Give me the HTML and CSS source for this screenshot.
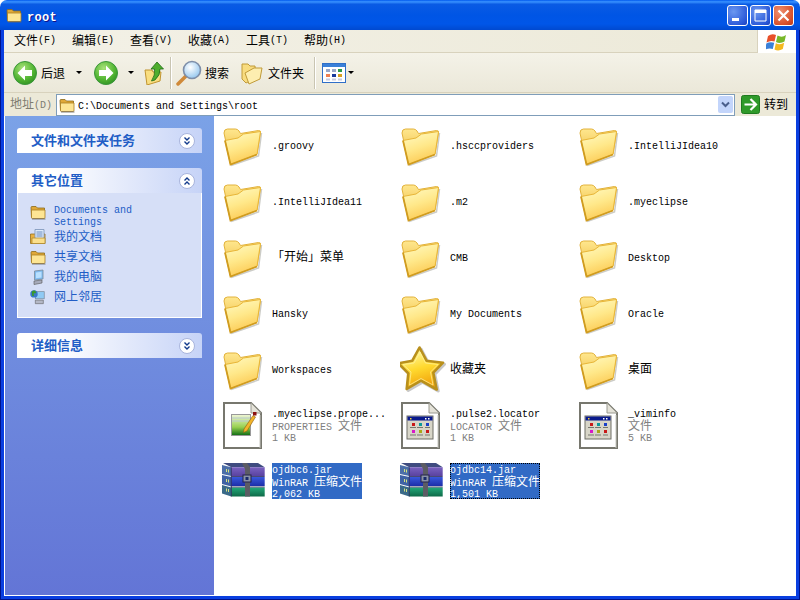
FILE: index.html
```html
<!DOCTYPE html>
<html lang="zh">
<head>
<meta charset="utf-8">
<title>root</title>
<link rel="stylesheet" href="styles.css">
</head>
<body>
<svg class="defs" width="0" height="0" aria-hidden="true">
  <defs>
    <linearGradient id="fold" x1="0.2" y1="0" x2="0.55" y2="1"><stop offset="0" stop-color="#fff9c0"/><stop offset="0.5" stop-color="#ffe88a"/><stop offset="1" stop-color="#fcc850"/></linearGradient>
    <linearGradient id="foldback" x1="0" y1="0" x2="0" y2="1"><stop offset="0" stop-color="#ffe78e"/><stop offset="1" stop-color="#e8b030"/></linearGradient>
    <linearGradient id="star" x1="0.3" y1="0" x2="0.6" y2="1"><stop offset="0" stop-color="#fff79a"/><stop offset="0.5" stop-color="#ffd92e"/><stop offset="1" stop-color="#f2a60e"/></linearGradient>
    <radialGradient id="ball" cx="0.4" cy="0.3" r="0.8"><stop offset="0" stop-color="#a8e27a"/><stop offset="0.6" stop-color="#52b532"/><stop offset="1" stop-color="#2a8a20"/></radialGradient>
    <linearGradient id="chart" x1="0" y1="0" x2="0" y2="1"><stop offset="0" stop-color="#f0f6d8"/><stop offset="0.6" stop-color="#98d050"/><stop offset="1" stop-color="#0c6a12"/></linearGradient>
    <radialGradient id="lens" cx="0.4" cy="0.35" r="0.7"><stop offset="0" stop-color="#ffffff"/><stop offset="1" stop-color="#8fc4ee"/></radialGradient>
    <linearGradient id="bookp" x1="0" y1="0" x2="0" y2="1"><stop offset="0" stop-color="#7a62c0"/><stop offset="1" stop-color="#5a42a0"/></linearGradient>
    <linearGradient id="bookb" x1="0" y1="0" x2="0" y2="1"><stop offset="0" stop-color="#3a58dc"/><stop offset="1" stop-color="#1c2ea8"/></linearGradient>
    <linearGradient id="bookg" x1="0" y1="0" x2="0" y2="1"><stop offset="0" stop-color="#22a878"/><stop offset="1" stop-color="#0f6a48"/></linearGradient>
    <symbol id="folder" viewBox="0 0 48 48">
      <path d="M9 44.500L36.500 35L39.500 12" fill="none" stroke="#9a9a90" stroke-width="1.500" opacity="0.5"/>
      <path d="M2 12Q2 8 5.500 8H13.500Q15.500 8 17 10L18.500 12.500L36.500 9.500Q39 9.500 38.500 11.500L35 33L8.500 43Z" fill="url(#foldback)" stroke="#e2b23c"/>
      <path d="M3 19.500L16 17L21.500 13L38.500 10.500L35 33.500L8.500 43.500Z" fill="url(#fold)" stroke="#e8b638"/>
      <path d="M3 19.500L8.500 43.500L35 33.500" fill="none" stroke="#d09c20" stroke-width="1.800"/>
    </symbol>
    <symbol id="star-icon" viewBox="0 0 48 48">
      <path d="M19.500 2.500L26.500 15.700L43 17.700L33.300 27.700L36.700 44.500L21 35.700L6.700 44L8.300 28.300L-1.500 18.300L12.300 15.700Z" fill="#777" opacity="0.4" stroke="#777" stroke-width="3" stroke-linejoin="round" transform="translate(1.500 1.500)"/>
      <path d="M19.500 2.500L26.500 15.700L43 17.700L33.300 27.700L36.700 44.500L21 35.700L6.700 44L8.300 28.300L-1.500 18.300L12.300 15.700Z" fill="url(#star)" stroke="#b9901c" stroke-width="2.600" stroke-linejoin="round"/>
      <path d="M20 7L25.500 18L38 19.500L30.500 27L33 40L21 33.500L9.500 40L11 27L3 19.500L14 18Z" fill="url(#star)" stroke="#fff6b0" stroke-width="0.700" stroke-linejoin="round" opacity="0.9"/>
    </symbol>
    <symbol id="page" viewBox="0 0 48 48">
      <path d="M2 2H29L39 12V47H2Z" fill="#fff" stroke="#77776e" stroke-width="2"/>
      <path d="M29 2V12H39Z" fill="#e4e2d8" stroke="#9a9a90"/>
      <path d="M38 14V47" stroke="#c8c8c0" fill="none"/>
    </symbol>
    <symbol id="app-doc" viewBox="0 0 48 48">
      <use href="#page" width="48" height="48"/>
      <rect x="7" y="15" width="26" height="23" fill="#d8d6c8" stroke="#6e6e66"/>
      <rect x="7.500" y="15.500" width="25" height="4" fill="#0a1a8c"/>
      <rect x="10" y="17" width="1.500" height="1.500" fill="#f0d040"/>
      <rect x="25" y="17" width="1.500" height="1.500" fill="#fff"/><rect x="28" y="17" width="1.500" height="1.500" fill="#fff"/>
      <rect x="12" y="22" width="3" height="3" fill="#c81818"/><rect x="19" y="22" width="3" height="3" fill="#0a9a9a"/><rect x="26" y="22" width="3" height="3" fill="#1a40c8"/>
      <rect x="12" y="29" width="3" height="3" fill="#d818c8"/><rect x="19" y="29" width="3" height="3" fill="#a8a818"/><rect x="26" y="29" width="3" height="3" fill="#c81818"/>
      <path d="M10 26.500H16M17 26.500H23M25 26.500H30M10 34H16M17 34H23M25 34H30" stroke="#77776e" fill="none"/>
    </symbol>
    <symbol id="prop-doc" viewBox="0 0 48 48">
      <use href="#page" width="48" height="48"/>
      <rect x="9.500" y="13.500" width="19" height="21" fill="url(#chart)" stroke="#999"/>
      <path d="M10 17H28M10 20H28" stroke="#b8c8d0" fill="none"/>
      <path d="M22 28L31 14.500L33.500 16L25 30L21.500 31.500Z" fill="#f2b42a" stroke="#8a5a10" stroke-width="0.600"/>
      <rect x="31" y="11" width="3.500" height="3.500" fill="#8c1010"/>
    </symbol>
    <symbol id="rar" viewBox="0 0 48 48">
      <path d="M1 6H36L42.700 10.300H9.300Z" fill="#3f4c80"/>
      <path d="M0 8L9.300 10.300V19L0 17Z" fill="#4c6fa8"/>
      <path d="M9.300 10.300H42.700V19H9.300Z" fill="url(#bookp)"/>
      <path d="M0 18L9.300 20V29.500L0 27Z" fill="#3f62a4"/>
      <path d="M9.300 20H42.700V29H9.300Z" fill="url(#bookb)"/>
      <path d="M0 28L9.300 30.500V39.500L0 36.500Z" fill="#3a6a88"/>
      <path d="M9.300 30.500H42.700V39.500H9.300Z" fill="url(#bookg)"/>
      <path d="M9.300 19.500H42.700M9.300 30H42.700M9.300 10.300V39.500" stroke="#1c1c50" stroke-width="0.800" fill="none"/>
      <rect x="4" y="12" width="1" height="3" fill="#d6e480"/><rect x="6" y="12.500" width="1" height="3" fill="#d6e480"/>
      <rect x="4" y="22" width="1" height="3" fill="#d6e480"/><rect x="6" y="22.500" width="1" height="3" fill="#d6e480"/>
      <rect x="4" y="31.500" width="1" height="3" fill="#d6e480"/><rect x="6" y="32" width="1" height="3" fill="#d6e480"/>
      <path d="M20 6H25L28 10.300V39.500H23V12Z" fill="#5c5c64"/>
      <rect x="21" y="18" width="8" height="7" fill="#8a92a6" stroke="#23234a"/><rect x="23.500" y="20" width="3" height="3" fill="#1a2a6a"/>
    </symbol>
    <symbol id="small-folder" viewBox="0 0 16 16">
      <path d="M1 3.500Q1 2.500 2 2.500H6L7.500 4H14.500V13.500H1.500Z" fill="#e0a838" stroke="#8a6a1a" stroke-width="0.800"/>
      <path d="M1.500 6H15V13.500Q15 14.500 14 14.500H2.500Q1.500 14.500 1.500 13.500Z" fill="#fde594" stroke="#a87e22" stroke-width="0.800"/>
      <path d="M2 15H15.500" stroke="#666" stroke-width="0.800"/>
    </symbol>
    <symbol id="mydocs" viewBox="0 0 16 16">
      <path d="M0.500 5H15V14.500H0.500Z" fill="#e8b040" stroke="#96701c" stroke-width="0.800"/>
      <path d="M5 0.500H14V12H5Z" fill="#dceafa" stroke="#7a92b8" stroke-width="0.800"/>
      <path d="M6.500 3H12.500M6.500 5H12.500M6.500 7H12.500" stroke="#6a8cc0" fill="none"/>
      <path d="M2 9H15V14.500H2Z" fill="#fbdf8c" stroke="#b08a30" stroke-width="0.800"/>
    </symbol>
    <symbol id="computer" viewBox="0 0 16 16">
      <path d="M4.500 2L13 1V10L4.500 11Z" fill="#7fbbf0" stroke="#7a8a9a" stroke-width="0.800"/>
      <path d="M6 3.500L11.500 2.800V8.500L6 9.200Z" fill="#b8e0ff"/>
      <path d="M4 12L12 11V14L4 15.500Z" fill="#a8acbc" stroke="#555" stroke-width="0.600"/>
    </symbol>
    <symbol id="network" viewBox="0 0 18 18">
      <rect x="6" y="3" width="10" height="8" fill="#8fcaf5" stroke="#7a8a9a" stroke-width="0.800"/>
      <path d="M6 12.500H15V16.500H6Z" fill="#b4b8c6" stroke="#555" stroke-width="0.600"/>
      <circle cx="4.500" cy="5.500" r="4.200" fill="#3a78c8"/>
      <path d="M2 3Q4 1 6 2L7 4.500L4 5L4.500 8L2.500 8Z" fill="#3a9a2a"/>
    </symbol>
    <symbol id="chev-down" viewBox="0 0 16 16">
      <circle cx="8" cy="8" r="7.500" fill="#fff" stroke="#a8b4dc"/>
      <path d="M5.500 4.500L8 7L10.500 4.500M5.500 8.500L8 11L10.500 8.500" fill="none" stroke="#123a8c" stroke-width="1.400"/>
    </symbol>
    <symbol id="chev-up" viewBox="0 0 16 16">
      <circle cx="8" cy="8" r="7.500" fill="#fff" stroke="#a8b4dc"/>
      <path d="M5.500 7.500L8 5L10.500 7.500M5.500 11.500L8 9L10.500 11.500" fill="none" stroke="#123a8c" stroke-width="1.400"/>
    </symbol>
  </defs>
</svg>

<div class="window">
  <header class="titlebar">
    <svg class="icon16 title-icon"><use href="#small-folder"/></svg>
    <span class="title">root</span>
    <div class="controls">
      <span class="ctl ctl-blue"><svg viewBox="0 0 21 21" width="21" height="21"><rect x="5" y="13" width="7" height="3" fill="#fff"/></svg></span>
      <span class="ctl ctl-blue"><svg viewBox="0 0 21 21" width="21" height="21"><path d="M5 5H16V16H5Z" fill="none" stroke="#fff"/><rect x="5" y="5" width="11" height="3" fill="#fff"/></svg></span>
      <span class="ctl ctl-red"><svg viewBox="0 0 21 21" width="21" height="21"><path d="M5.500 5.500L15.500 15.500M15.500 5.500L5.500 15.500" stroke="#fff" stroke-width="2.200"/></svg></span>
    </div>
  </header>

  <div class="frame">
    <nav class="menubar">
      <div class="menus">
        <span class="menu"><span class="cn">文件</span>(F)</span>
        <span class="menu"><span class="cn">编辑</span>(E)</span>
        <span class="menu"><span class="cn">查看</span>(V)</span>
        <span class="menu"><span class="cn">收藏</span>(A)</span>
        <span class="menu"><span class="cn">工具</span>(T)</span>
        <span class="menu"><span class="cn">帮助</span>(H)</span>
      </div>
      <div class="flag">
        <svg viewBox="0 0 22 20" width="22" height="20">
          <path d="M2 4Q6 1 10 3L8.500 9.500Q4.500 8 0.500 10.500Z" fill="#e8502a"/>
          <path d="M11.500 3.500Q16 6 20 3L18.500 9.500Q14 12 10 10Z" fill="#78b82a"/>
          <path d="M0.300 11.500Q4 9.500 8.200 10.800L6.800 17Q3 15.500 -1 17.800Z" fill="#3a80d8"/>
          <path d="M9.800 11.200Q14 13.500 18.200 10.800L16.800 17Q12.500 19.500 8.500 17.500Z" fill="#f4b820"/>
        </svg>
      </div>
    </nav>

    <div class="toolbar">
      <div class="tbtn back">
        <svg viewBox="0 0 24 24" width="24" height="24"><circle cx="12" cy="12" r="11.500" fill="url(#ball)" stroke="#3a963a"/><path d="M12 4.500L4.500 12L12 19.500V15H19V9H12Z" fill="#fff"/></svg>
        <span class="cn">后退</span>
      </div>
      <span class="caret caret-a"></span>
      <div class="tbtn fwd">
        <svg viewBox="0 0 24 24" width="24" height="24"><circle cx="12" cy="12" r="11.500" fill="url(#ball)" stroke="#3a963a"/><path d="M12 4.500L19.500 12L12 19.500V15H5V9H12Z" fill="#fff"/></svg>
      </div>
      <span class="caret caret-b"></span>
      <svg class="up" viewBox="0 0 20 24" width="20" height="24">
        <path d="M1 9H8L9 11H17L16 20L3 24Z" fill="#f9de80" stroke="#c09430"/>
        <path d="M13 1L19.500 8H16Q16.500 14 11 19L7.500 20Q11.500 14 10.500 8H7Z" fill="#4fae2e" stroke="#1f6a18" stroke-width="0.800"/>
      </svg>
      <span class="tsep"></span>
      <div class="tbtn search">
        <svg viewBox="0 0 26 26" width="26" height="26"><path d="M10.500 15.500L2 24" stroke="#d08a3a" stroke-width="3.500" stroke-linecap="round"/><circle cx="16" cy="10" r="8.500" fill="url(#lens)" stroke="#7e8ea8" stroke-width="1.600"/></svg>
        <span class="cn">搜索</span>
      </div>
      <div class="tbtn folders">
        <svg viewBox="0 0 22 24" width="22" height="24"><path d="M1 3H7L9 5H14L15 17L5 22L1 18Z" fill="#f8dc80" stroke="#c09a38"/><path d="M4 12L13 7H21L19 18L8 23Z" fill="#fdeeb0" stroke="#c09a38"/></svg>
        <span class="cn">文件夹</span>
      </div>
      <span class="tsep sep2"></span>
      <div class="views">
        <svg viewBox="0 0 24 20" width="24" height="20"><rect x="0.500" y="0.500" width="23" height="19" fill="#fff" stroke="#2f6fc8"/><rect x="1" y="1" width="22" height="3" fill="#3a80d8"/><rect x="4" y="6" width="4" height="3" fill="#9aa8c8"/><rect x="10" y="6" width="4" height="3" fill="#9aa8c8"/><rect x="16" y="6" width="4" height="3" fill="#2a9a4a"/><rect x="4" y="11" width="4" height="3" fill="#f08050"/><rect x="10" y="11" width="4" height="3" fill="#1a3a9c"/><rect x="16" y="11" width="4" height="3" fill="#d8a020"/><rect x="4" y="15.500" width="4" height="2" fill="#c8cce0"/><rect x="10" y="15.500" width="4" height="2" fill="#c8cce0"/><rect x="16" y="15.500" width="4" height="2" fill="#c8cce0"/></svg>
        <span class="caret"></span>
      </div>
    </div>

    <div class="addressbar">
      <span class="addr-label"><span class="cn">地址</span>(D)</span>
      <div class="addr-input">
        <svg class="icon16"><use href="#small-folder"/></svg>
        <span class="addr-text">C:\Documents and Settings\root</span>
        <span class="addr-drop"><svg viewBox="0 0 15 17" width="15" height="17"><path d="M4 6.500L7.500 10L11 6.500" fill="none" stroke="#4a5f8c" stroke-width="2"/></svg></span>
      </div>
      <div class="go">
        <svg viewBox="0 0 19 19" width="19" height="19"><rect x="0.500" y="0.500" width="18" height="18" rx="2" fill="#2f9a2a" stroke="#1f7a1f"/><path d="M9.500 4L15 9.500L9.500 15M3.500 9.500H14" fill="none" stroke="#fff" stroke-width="2.200"/></svg>
        <span class="cn">转到</span>
      </div>
    </div>

    <div class="main">
      <aside class="sidebar">
        <section class="panel">
          <div class="panel-head"><span class="panel-title">文件和文件夹任务</span><svg class="chev"><use href="#chev-down"/></svg></div>
        </section>
        <section class="panel">
          <div class="panel-head"><span class="panel-title">其它位置</span><svg class="chev"><use href="#chev-up"/></svg></div>
          <div class="panel-body">
            <div class="link first"><svg class="icon16"><use href="#small-folder"/></svg><span class="link-text latin">Documents and Settings</span></div>
            <div class="link"><svg class="icon16"><use href="#mydocs"/></svg><span class="link-text cn">我的文档</span></div>
            <div class="link"><svg class="icon16"><use href="#small-folder"/></svg><span class="link-text cn">共享文档</span></div>
            <div class="link"><svg class="icon16"><use href="#computer"/></svg><span class="link-text cn">我的电脑</span></div>
            <div class="link"><svg class="icon16"><use href="#network"/></svg><span class="link-text cn">网上邻居</span></div>
          </div>
        </section>
        <section class="panel">
          <div class="panel-head"><span class="panel-title">详细信息</span><svg class="chev"><use href="#chev-down"/></svg></div>
        </section>
      </aside>

      <div class="files">
        <div class="tile"><svg class="icon48"><use href="#folder"/></svg><span class="name">.groovy</span></div>
        <div class="tile"><svg class="icon48"><use href="#folder"/></svg><span class="name">.hsccproviders</span></div>
        <div class="tile"><svg class="icon48"><use href="#folder"/></svg><span class="name">.IntelliJIdea10</span></div>
        <div class="tile"><svg class="icon48"><use href="#folder"/></svg><span class="name">.IntelliJIdea11</span></div>
        <div class="tile"><svg class="icon48"><use href="#folder"/></svg><span class="name">.m2</span></div>
        <div class="tile"><svg class="icon48"><use href="#folder"/></svg><span class="name">.myeclipse</span></div>
        <div class="tile"><svg class="icon48"><use href="#folder"/></svg><span class="name cn">「开始」菜单</span></div>
        <div class="tile"><svg class="icon48"><use href="#folder"/></svg><span class="name">CMB</span></div>
        <div class="tile"><svg class="icon48"><use href="#folder"/></svg><span class="name">Desktop</span></div>
        <div class="tile"><svg class="icon48"><use href="#folder"/></svg><span class="name">Hansky</span></div>
        <div class="tile"><svg class="icon48"><use href="#folder"/></svg><span class="name">My Documents</span></div>
        <div class="tile"><svg class="icon48"><use href="#folder"/></svg><span class="name">Oracle</span></div>
        <div class="tile"><svg class="icon48"><use href="#folder"/></svg><span class="name">Workspaces</span></div>
        <div class="tile"><svg class="icon48 star"><use href="#star-icon"/></svg><span class="name cn">收藏夹</span></div>
        <div class="tile"><svg class="icon48"><use href="#folder"/></svg><span class="name cn">桌面</span></div>
        <div class="tile"><svg class="icon48"><use href="#prop-doc"/></svg><span class="name multi"><span class="line">.myeclipse.prope...</span><span class="line meta">PROPERTIES <span class="cn">文件</span></span><span class="line meta">1 KB</span></span></div>
        <div class="tile"><svg class="icon48"><use href="#app-doc"/></svg><span class="name multi"><span class="line">.pulse2.locator</span><span class="line meta">LOCATOR <span class="cn">文件</span></span><span class="line meta">1 KB</span></span></div>
        <div class="tile"><svg class="icon48"><use href="#app-doc"/></svg><span class="name multi"><span class="line">_viminfo</span><span class="line meta"><span class="cn">文件</span></span><span class="line meta">5 KB</span></span></div>
        <div class="tile"><svg class="icon48"><use href="#rar"/></svg><span class="name multi selected"><span class="line">ojdbc6.jar</span><span class="line">WinRAR <span class="cn">压缩文件</span></span><span class="line">2,062 KB</span></span></div>
        <div class="tile"><svg class="icon48"><use href="#rar"/></svg><span class="name multi selected focused"><span class="line">ojdbc14.jar</span><span class="line">WinRAR <span class="cn">压缩文件</span></span><span class="line">1,501 KB</span></span></div>
      </div>
    </div>
  </div>
</div>
</body>
</html>
```

FILE: styles.css
```css
* { box-sizing: border-box; }
html, body { margin: 0; padding: 0; }
body {
  width: 800px;
  height: 600px;
  overflow: hidden;
  background: #fff;
  font-family: "Liberation Mono", "Noto Sans CJK SC", monospace;
  font-size: 10px;
  color: #000;
}
.defs { position: absolute; }
.cn { font-family: "Noto Sans CJK SC", sans-serif; font-size: 12px; line-height: 12px; }

.window { width: 800px; height: 600px; display: flex; flex-direction: column; }

.titlebar {
  height: 30px;
  flex: none;
  display: flex;
  align-items: center;
  padding: 0 6px;
  border-radius: 7px 7px 0 0;
  background: linear-gradient(180deg, #0058ee 0%, #3a93ff 6%, #0a5be4 14%, #0055e5 50%, #0056e8 80%, #0049d0 100%);
}
.title-icon { margin-right: 5px; }
.title {
  padding-top: 5px;
  font-family: "Liberation Mono", monospace;
  font-weight: bold;
  font-size: 12px;
  letter-spacing: 0.3px;
  color: #fff;
  text-shadow: 1px 1px 0 #0f1089;
}
.controls { margin-left: auto; display: flex; gap: 2px; }
.ctl {
  width: 21px;
  height: 21px;
  border: 1px solid #fff;
  border-radius: 3px;
  display: block;
  overflow: hidden;
}
.ctl svg { display: block; margin: -1px; }
.ctl-blue { background: radial-gradient(circle at 30% 30%, #6b97f0, #2a58d8 75%, #1c3fb8); }
.ctl-red { background: radial-gradient(circle at 30% 30%, #ee9070, #d9502a 70%, #b83a18); }

.frame {
  flex: 1;
  min-height: 0;
  display: flex;
  flex-direction: column;
  padding: 0 4px 4px;
  background: #0a3fe0;
  box-shadow: inset 1px 0 #00138c, inset -1px 0 #00138c, inset 0 -1px #00138c;
}

.menubar {
  height: 23px;
  flex: none;
  display: flex;
  background: linear-gradient(90deg, #f3f1e7, #ece9d8);
  border-bottom: 1px solid #d8d2bd;
}
.menus { flex: 1; display: flex; padding-left: 2px; }
.menu {
  width: 58px;
  padding: 0 0 2px 8px;
  display: flex;
  align-items: center;
  height: 22px;
  white-space: nowrap;
}
.flag {
  width: 39px;
  height: 23px;
  background: #fff;
  display: flex;
  align-items: center;
  justify-content: center;
  border-left: 1px solid #d8d2bd;
}

.toolbar {
  height: 40px;
  flex: none;
  display: flex;
  align-items: center;
  padding-left: 9px;
  background: linear-gradient(180deg, #f4f2e8, #ebe8d9);
  border-bottom: 1px solid #d8d2bd;
}
.tbtn { display: flex; align-items: center; }
.back .cn { margin-left: 4px; }
.caret {
  display: block;
  width: 0;
  height: 0;
  border: 3px solid transparent;
  border-top: 3px solid #000;
  border-bottom: 0;
}
.caret-a { margin: 0 12px 0 11px; }
.caret-b { margin: 0 10px 0 10px; }
.up { flex: none; }
.tsep { width: 1px; height: 32px; background: #c9c5b2; margin: 0 5px 0 6px; box-shadow: 1px 0 #fff; }
.search .cn { margin-left: 3px; }
.folders { margin-left: 12px; }
.folders .cn { margin-left: 5px; }
.sep2 { margin: 0 7px 0 10px; }
.views { display: flex; align-items: center; gap: 2px; }

.addressbar {
  height: 23px;
  flex: none;
  display: flex;
  align-items: center;
  background: #ece9d8;
}
.addr-label { width: 52px; padding: 0 0 2px 6px; color: #7e7c70; white-space: nowrap; }
.addr-input {
  width: 679px;
  height: 22px;
  display: flex;
  align-items: center;
  gap: 3px;
  padding-left: 2px;
  background: #fff;
  border: 1px solid #7f9db9;
}
.addr-text { flex: 1; padding-top: 4px; }
.addr-drop {
  width: 15px;
  height: 17px;
  margin-right: 1px;
  background: #c3d5fb;
  border-radius: 2px;
}
.addr-drop svg { display: block; }
.go { margin-left: 6px; display: flex; align-items: center; gap: 4px; }
.go .cn { margin-bottom: 2px; }

.main { flex: 1; min-height: 0; display: flex; background: #fff; }

.sidebar {
  width: 209px;
  margin-left: 1px;
  margin-bottom: 1px;
  padding: 12px 12px 0;
  display: flex;
  flex-direction: column;
  gap: 15px;
  background: linear-gradient(180deg, #7ba2e7, #6375d6);
}
.panel-head {
  height: 25px;
  display: flex;
  align-items: center;
  justify-content: space-between;
  padding: 0 7px 0 14px;
  border-radius: 3px 3px 0 0;
  background: linear-gradient(90deg, #fff 20%, #c6d3f7);
}
.panel-title {
  margin-bottom: 2px;
  font-family: "Noto Sans CJK SC", sans-serif;
  font-size: 13px;
  font-weight: bold;
  color: #215dc6;
}
.chev { width: 16px; height: 16px; }
.panel-body {
  padding: 11px 0 11px 12px;
  height: 125px;
  background: #d6dff7;
  border: 1px solid #fff;
  border-top: 0;
}
.link { height: 20px; display: flex; align-items: center; gap: 8px; color: #215dc6; }
.link.first { height: 23px; align-items: flex-start; }
.link-text { width: 130px; line-height: 12px; }
.link-text.latin { padding-top: 1px; }
.link-text.cn { margin-top: -2px; }
.icon16 { width: 16px; height: 16px; flex: none; }

.files {
  flex: 1;
  padding: 1px 0 0 8px;
  display: grid;
  grid-template-columns: repeat(3, 178px);
  grid-auto-rows: 56px;
}
.tile { display: flex; align-items: center; }
.icon48 { width: 48px; height: 48px; flex: none; margin-right: 2px; }
.star { overflow: visible; }
.name { padding-top: 4px; line-height: 12px; white-space: nowrap; }
.name.cn { padding-top: 0; margin-top: -2px; }
.multi { padding-top: 0; display: flex; flex-direction: column; }
.line { display: block; height: 12px; line-height: 16px; }
.meta { color: #808080; }
.selected { background: #316ac5; color: #fff; }
.focused { outline: 1px dotted #000; outline-offset: -1px; }
```
